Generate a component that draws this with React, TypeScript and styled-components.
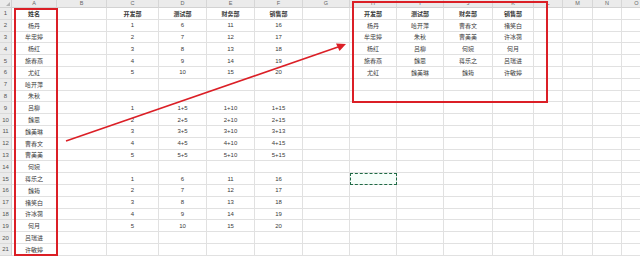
import React from "react";
import styled, { createGlobalStyle } from "styled-components";

const Global = createGlobalStyle`
  html, body { margin: 0; padding: 0; background: #ffffff; overflow: hidden; }
  body { width: 640px; height: 262px; }
`;

const COLS = ["A", "B", "C", "D", "E", "F", "G", "H", "I", "J", "K", "L", "M", "N", "O"];
const WIDTHS = [45, 50, 52, 48, 48, 48, 47, 47, 47, 49, 41, 29, 30, 29, 30];

const DATA: string[][] = [
  ["姓名", "", "开发部", "测试部", "财务部", "销售部", "", "开发部", "测试部", "财务部", "销售部"],
  ["杨丹", "", "1", "6", "11", "16", "", "杨丹", "哈开萍", "曹春文", "褚笑白"],
  ["牟忠婷", "", "2", "7", "12", "17", "", "牟忠婷", "朱秋", "曹美美", "许冰蔼"],
  ["杨红", "", "3", "8", "13", "18", "", "杨红", "吕柳", "何婉", "何月"],
  ["施春燕", "", "4", "9", "14", "19", "", "施春燕", "魏思", "蒋乐之", "吕瑞进"],
  ["尤虹", "", "5", "10", "15", "20", "", "尤虹", "魏美琳", "魏筠", "许敏婷"],
  ["哈开萍"],
  ["朱秋"],
  ["吕柳", "", "1", "1+5", "1+10", "1+15"],
  ["魏思", "", "2", "2+5", "2+10", "2+15"],
  ["魏美琳", "", "3", "3+5", "3+10", "3+13"],
  ["曹春文", "", "4", "4+5", "4+10", "4+15"],
  ["曹美美", "", "5", "5+5", "5+10", "5+15"],
  ["何婉"],
  ["蒋乐之", "", "1", "6", "11", "16"],
  ["魏筠", "", "2", "7", "12", "17"],
  ["褚笑白", "", "3", "8", "13", "18"],
  ["许冰蔼", "", "4", "9", "14", "19"],
  ["何月", "", "5", "10", "15", "20"],
  ["吕瑞进"],
  ["许敏婷"],
];

const Page = styled.div`
  position: relative;
  width: 640px;
  height: 262px;
  overflow: hidden;
  font-family: "Noto Sans CJK SC", "Noto Sans", sans-serif;
`;

const Sheet = styled.div`
  display: grid;
  grid-template-columns: 12px ${WIDTHS.map((w) => `${w}px`).join(" ")};
  grid-template-rows: 8px repeat(21, 11.8px);
  width: max-content;
`;

const Corner = styled.div`
  position: relative;
  background: #ebebeb;
  border-right: 1px solid #d2d2d2;
  border-bottom: 1px solid #d2d2d2;
  box-sizing: border-box;
  &::after {
    content: "";
    position: absolute;
    right: 1px;
    bottom: 1px;
    border-left: 4px solid transparent;
    border-bottom: 4px solid #b5b5b5;
  }
`;

const ColHead = styled.div`
  background: #ebebeb;
  border-right: 1px solid #d6d6d6;
  border-bottom: 1px solid #d2d2d2;
  box-sizing: border-box;
  color: #666;
  font-family: "Liberation Sans", Arial, sans-serif;
  font-size: 5.5px;
  line-height: 7px;
  text-align: center;
`;

const RowHead = styled.div`
  background: #ebebeb;
  border-right: 1px solid #d2d2d2;
  border-bottom: 1px solid #dadada;
  box-sizing: border-box;
  color: #555;
  font-family: "Liberation Sans", Arial, sans-serif;
  font-size: 6px;
  display: flex;
  align-items: center;
  justify-content: center;
`;

const Cell = styled.div<{ $bold?: boolean; $selected?: boolean }>`
  position: relative;
  border-right: 1px solid #e1e1e1;
  border-bottom: 1px solid #e1e1e1;
  box-sizing: border-box;
  display: flex;
  align-items: center;
  justify-content: center;
  white-space: nowrap;
  overflow: visible;
  color: #3a3a3a;
  font-size: 6px;
  font-weight: ${(p) => (p.$bold ? 700 : 400)};
  font-family: ${(p) =>
    p.$bold
      ? `"Noto Sans CJK SC", sans-serif`
      : `"Liberation Sans", "Noto Sans CJK SC", sans-serif`};
  ${(p) =>
    p.$selected
      ? `outline: 1px dashed #1f6b45; outline-offset: -1px; background: #f7fffb;`
      : ""}
`;

const RedBox = styled.div<{ $l: number; $t: number; $w: number; $h: number }>`
  position: absolute;
  left: ${(p) => p.$l}px;
  top: ${(p) => p.$t}px;
  width: ${(p) => p.$w}px;
  height: ${(p) => p.$h}px;
  border: 2px solid #db1f26;
  box-sizing: border-box;
  pointer-events: none;
`;

const ArrowLayer = styled.svg`
  position: absolute;
  left: 0;
  top: 0;
  pointer-events: none;
`;

export default function App() {
  return (
    <Page>
      <Global />
      <Sheet>
        <Corner />
        {COLS.map((c) => (
          <ColHead key={c}>{c}</ColHead>
        ))}
        {DATA.map((row, ri) => (
          <React.Fragment key={ri}>
            <RowHead>{ri + 1}</RowHead>
            {COLS.map((c, ci) => (
              <Cell
                key={c}
                $bold={ri === 0}
                $selected={ri === 14 && ci === 7}
              >
                {row[ci] ?? ""}
              </Cell>
            ))}
          </React.Fragment>
        ))}
      </Sheet>
      <RedBox $l={14} $t={8} $w={44} $h={248} />
      <RedBox $l={352} $t={1} $w={196} $h={102} />
      <ArrowLayer width="640" height="262" viewBox="0 0 640 262">
        <line x1="66" y1="141" x2="338" y2="47" stroke="#db1f26" strokeWidth="1.6" />
        <polygon points="346,44 336,43.5 339.5,51" fill="#db1f26" />
      </ArrowLayer>
    </Page>
  );
}
